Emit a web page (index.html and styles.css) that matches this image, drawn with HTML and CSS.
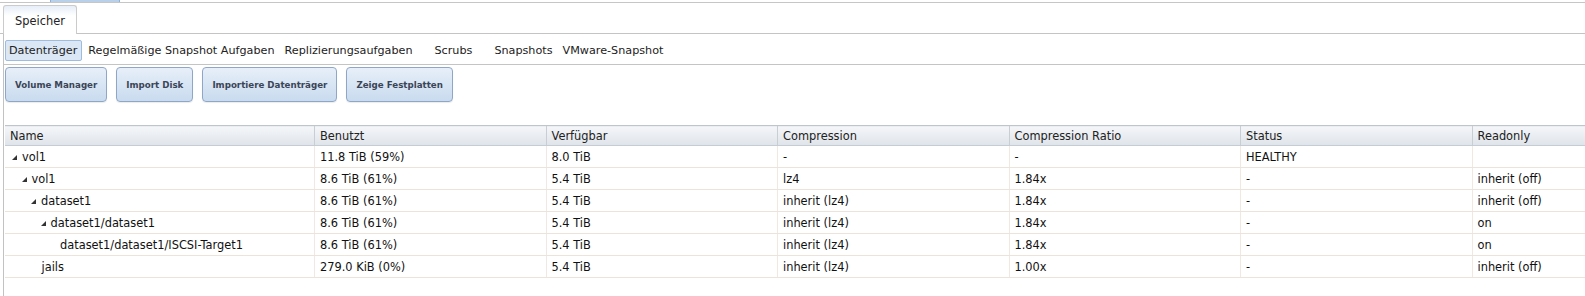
FILE: index.html
```html
<!DOCTYPE html>
<html lang="de">

<head>
    <meta charset="UTF-8">
    <title>Speicher</title>
    <link rel="stylesheet" href="styles.css">
</head>

<body>
    <!-- Top navigation remnant -->
    <div class="topbar">
        <span class="top-tab"></span>
    </div>

    <!-- Main tab strip -->
    <div class="tabstrip">
        <div class="tab active">Speicher</div>
    </div>

    <div class="panel">
        <!-- Sub tabs -->
        <div class="subtabs">
            <span class="subtab selected">Datenträger</span>
            <span class="subtab">Regelmäßige Snapshot Aufgaben</span>
            <span class="subtab wide">Replizierungsaufgaben</span>
            <span class="subtab wide">Scrubs</span>
            <span class="subtab">Snapshots</span>
            <span class="subtab">VMware-Snapshot</span>
        </div>

        <!-- Action buttons -->
        <div class="toolbar">
            <button class="btn">Volume Manager</button>
            <button class="btn">Import Disk</button>
            <button class="btn">Importiere Datenträger</button>
            <button class="btn">Zeige Festplatten</button>
        </div>

        <!-- Volume tree grid -->
        <table class="grid">
            <colgroup>
                <col class="c-name">
                <col class="c-std">
                <col class="c-std">
                <col class="c-std">
                <col class="c-std">
                <col class="c-std">
                <col>
            </colgroup>
            <thead>
                <tr>
                    <th>Name</th>
                    <th>Benutzt</th>
                    <th>Verfügbar</th>
                    <th>Compression</th>
                    <th>Compression Ratio</th>
                    <th>Status</th>
                    <th>Readonly</th>
                </tr>
            </thead>
            <tbody>
                <tr>
                    <td><span class="node lvl0"><span class="arrow"></span>vol1</span></td>
                    <td>11.8 TiB (59%)</td>
                    <td>8.0 TiB</td>
                    <td>-</td>
                    <td>-</td>
                    <td>HEALTHY</td>
                    <td></td>
                </tr>
                <tr>
                    <td><span class="node lvl1"><span class="arrow"></span>vol1</span></td>
                    <td>8.6 TiB (61%)</td>
                    <td>5.4 TiB</td>
                    <td>lz4</td>
                    <td>1.84x</td>
                    <td>-</td>
                    <td>inherit (off)</td>
                </tr>
                <tr>
                    <td><span class="node lvl2"><span class="arrow"></span>dataset1</span></td>
                    <td>8.6 TiB (61%)</td>
                    <td>5.4 TiB</td>
                    <td>inherit (lz4)</td>
                    <td>1.84x</td>
                    <td>-</td>
                    <td>inherit (off)</td>
                </tr>
                <tr>
                    <td><span class="node lvl3"><span class="arrow"></span>dataset1/dataset1</span></td>
                    <td>8.6 TiB (61%)</td>
                    <td>5.4 TiB</td>
                    <td>inherit (lz4)</td>
                    <td>1.84x</td>
                    <td>-</td>
                    <td>on</td>
                </tr>
                <tr>
                    <td><span class="node lvl4 leaf">dataset1/dataset1/ISCSI-Target1</span></td>
                    <td>8.6 TiB (61%)</td>
                    <td>5.4 TiB</td>
                    <td>inherit (lz4)</td>
                    <td>1.84x</td>
                    <td>-</td>
                    <td>on</td>
                </tr>
                <tr>
                    <td><span class="node lvl2 leaf">jails</span></td>
                    <td>279.0 KiB (0%)</td>
                    <td>5.4 TiB</td>
                    <td>inherit (lz4)</td>
                    <td>1.00x</td>
                    <td>-</td>
                    <td>inherit (off)</td>
                </tr>
            </tbody>
        </table>
    </div>
</body>

</html>
```

FILE: styles.css
```css
body {
    margin: 0;
    font-family: "DejaVu Sans", Verdana, sans-serif;
    font-size: 11.4px;
    color: #000;
    background: #fff;
    overflow: hidden;
}

/* Top remnant bar */
.topbar {
    height: 2px;
    border-bottom: 1px solid #c6c6c6;
    position: relative;
}

.top-tab {
    position: absolute;
    left: 50px;
    top: 0;
    width: 68px;
    height: 2px;
    background: #b9d0ea;
    border-left: 1px solid #8fb0d6;
    border-right: 1px solid #8fb0d6;
}

/* Main tab strip */
.tabstrip {
    display: flex;
    padding: 2px 0 0 3px;
    border-bottom: 1px solid #c4c4c4;
}

.tab {
    width: 72px;
    height: 27px;
    line-height: 30px;
    text-align: center;
    border: 1px solid #cbcbcb;
    border-bottom: none;
    border-radius: 3px 3px 0 0;
    background: linear-gradient(#e6eef8, #fff 35%);
    color: #222;
    margin-bottom: -1px;
    padding-bottom: 1px;
}

/* Content panel */
.panel {
    margin-left: 3px;
    border-left: 1px solid #c2c2c2;
    min-height: 300px;
}

.subtabs {
    display: flex;
    align-items: center;
    padding: 2px 0 0 1px;
    height: 28px;
    border-bottom: 1px solid #c4c4c4;
    font-size: 11.2px;
    color: #222;
}

.subtab {
    padding: 3px 3px;
    margin-right: 2px;
    border: 1px solid transparent;
    border-radius: 2px;
}

.subtab.selected {
    background: #dbe7f5;
    border-color: #9ebbe0;
    padding: 3px 4px 3px 3px;
}

.subtab.wide {
    margin-right: 14px;
}

/* Buttons */
.toolbar {
    display: flex;
    gap: 9px;
    padding: 2px 0 0 1px;
    height: 58px;
}

.btn {
    height: 35px;
    padding: 0 9px;
    font-family: "DejaVu Sans", Verdana, sans-serif;
    font-size: 8.7px;
    font-weight: bold;
    color: #3b4557;
    background: linear-gradient(#e7eff9, #c9dbef);
    border: 1px solid #8fa6c6;
    border-radius: 4px;
    box-shadow: 0 1px 1px rgba(0, 0, 0, 0.08);
}

/* Tree grid */
.grid {
    border-collapse: collapse;
    table-layout: fixed;
    width: 1620px;
    margin-left: 1px;
    color: #111;
}

.c-name {
    width: 309.5px;
}

.c-std {
    width: 231.5px;
}

.grid th {
    height: 19px;
    text-align: left;
    font-weight: normal;
    padding: 0 5px;
    background: linear-gradient(#f4f6f9, #dfe4ea);
    border-top: 1px solid #bfc5cc;
    border-bottom: 1px solid #c6ccd3;
    border-left: 1px solid #c9ced5;
    color: #222;
}

.grid th:first-child {
    border-left: none;
}

.grid td {
    height: 21px;
    padding: 0 5px;
    border-bottom: 1px solid #ebe4da;
    border-left: 1px solid #efe9e1;
    white-space: nowrap;
}

.grid td:first-child {
    border-left: none;
}

.node {
    display: inline-flex;
    align-items: center;
}

.arrow {
    width: 0;
    height: 0;
    border-left: 5px solid transparent;
    border-bottom: 5px solid #333;
    margin-right: 5px;
}

.lvl0 { padding-left: 2px; }
.lvl1 { padding-left: 11.5px; }
.lvl2 { padding-left: 21px; }
.lvl3 { padding-left: 30.5px; }
.leaf.lvl2 { padding-left: 31.5px; }
.leaf.lvl4 { padding-left: 50px; }
```
